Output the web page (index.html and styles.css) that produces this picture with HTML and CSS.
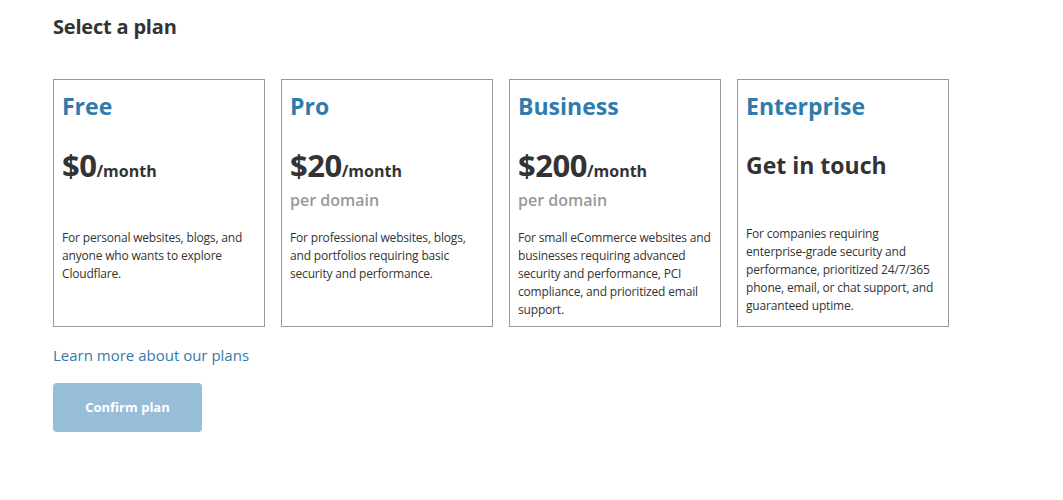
FILE: index.html
```html
<!DOCTYPE html>
<html>
<head>
<meta charset="utf-8">
<link rel="stylesheet" href="styles.css">
</head>
<body>
<main class="page">
  <h2 class="title">Select a plan</h2>
  <div class="plans">
    <div class="plan">
      <h3 class="plan-name">Free</h3>
      <div class="price-block">
        <div class="price"><span class="amount">$0</span><span class="unit">/month</span></div>
      </div>
      <p class="desc">For personal websites, blogs, and anyone who wants to explore Cloudflare.</p>
    </div>
    <div class="plan">
      <h3 class="plan-name">Pro</h3>
      <div class="price-block">
        <div class="price"><span class="amount">$20</span><span class="unit">/month</span></div>
        <div class="per">per domain</div>
      </div>
      <p class="desc">For professional websites, blogs, and portfolios requiring basic security and performance.</p>
    </div>
    <div class="plan">
      <h3 class="plan-name">Business</h3>
      <div class="price-block">
        <div class="price"><span class="amount">$200</span><span class="unit">/month</span></div>
        <div class="per">per domain</div>
      </div>
      <p class="desc">For small eCommerce websites and businesses requiring advanced security and performance, PCI compliance, and prioritized email support.</p>
    </div>
    <div class="plan">
      <h3 class="plan-name">Enterprise</h3>
      <div class="price-block price-block-ent">
        <div class="touch">Get in touch</div>
      </div>
      <p class="desc">For companies requiring enterprise-grade security and performance, prioritized 24/7/365 phone, email, or chat support, and guaranteed uptime.</p>
    </div>
  </div>
  <a class="learn" href="#">Learn more about our plans</a>
  <div class="actions">
    <button class="confirm" type="button">Confirm plan</button>
  </div>
</main>
</body>
</html>
```

FILE: styles.css
```css
html, body {
  margin: 0;
  padding: 0;
  background: #fff;
}
body {
  font-family: "Open Sans", "DejaVu Sans", sans-serif;
  color: #333;
}
.page {
  padding: 13px 0 0 53px;
}
.title {
  margin: 0;
  font-size: 20px;
  line-height: 28px;
  font-weight: 700;
  color: #333;
  letter-spacing: -0.2px;
}
.plans {
  display: flex;
  gap: 16px;
  margin-top: 38px;
}
.plan {
  box-sizing: border-box;
  width: 212px;
  height: 248px;
  border: 1px solid #999;
  padding: 11px 8px 0 8px;
  display: flex;
  flex-direction: column;
  overflow: hidden;
}
.plan-name {
  margin: 0;
  font-size: 23px;
  line-height: 30px;
  font-weight: 700;
  color: #2f7bae;
  flex-shrink: 0;
}
.price-block {
  margin-top: 25px;
  height: 83px;
  flex-shrink: 0;
}
.price-block-ent {
  height: 79px;
}
.price {
  display: flex;
  align-items: baseline;
  line-height: 38px;
}
.amount {
  font-size: 31px;
  font-weight: 700;
  letter-spacing: -0.5px;
}
.unit {
  font-size: 16px;
  font-weight: 700;
}
.per {
  font-size: 16px;
  line-height: 24px;
  color: #999;
  font-weight: 600;
  margin-top: -2px;
}
.touch {
  font-size: 23px;
  font-weight: 700;
  line-height: 38px;
}
.desc {
  margin: 0;
  font-size: 12px;
  line-height: 18px;
  color: #333;
  letter-spacing: -0.18px;
}
.learn {
  display: inline-block;
  margin-top: 17px;
  font-size: 15px;
  line-height: 22px;
  color: #3579ab;
  text-decoration: none;
}
.actions {
  margin-top: 17px;
}
.confirm {
  width: 149px;
  height: 49px;
  border: 0;
  border-radius: 4px;
  background: #98bdd9;
  color: #fff;
  font-family: inherit;
  font-size: 13px;
  font-weight: 700;
  cursor: pointer;
  padding: 0 0 2px 0;
}
```
